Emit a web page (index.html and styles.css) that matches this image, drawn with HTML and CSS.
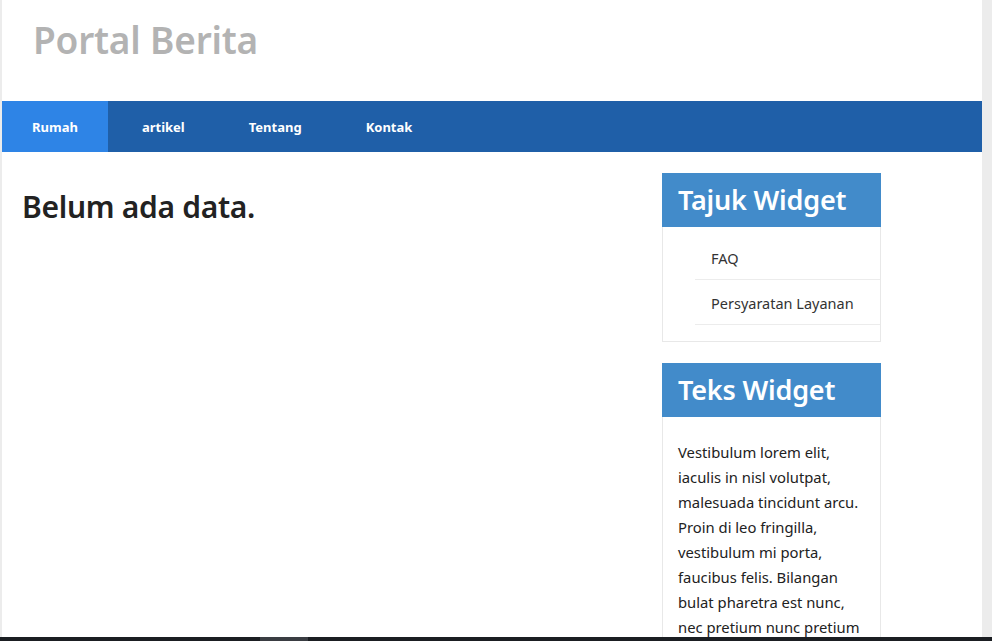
FILE: index.html
```html
<!DOCTYPE html>
<html lang="id">
<head>
<meta charset="utf-8">
<title>Portal Berita</title>
<link rel="stylesheet" href="styles.css">
</head>
<body>
<div class="page">
  <header class="site-header">
    <h1 class="site-title">Portal Berita</h1>
  </header>
  <nav class="main-nav">
    <a class="nav-item active" href="#">Rumah</a>
    <a class="nav-item" href="#">artikel</a>
    <a class="nav-item" href="#">Tentang</a>
    <a class="nav-item" href="#">Kontak</a>
  </nav>
  <div class="content">
    <main class="main">
      <h2 class="empty">Belum ada data.</h2>
    </main>
    <aside class="sidebar">
      <section class="widget">
        <h3 class="widget-title">Tajuk Widget</h3>
        <ul class="widget-list">
          <li><a href="#">FAQ</a></li>
          <li><a href="#">Persyaratan Layanan</a></li>
        </ul>
      </section>
      <section class="widget">
        <h3 class="widget-title">Teks Widget</h3>
        <div class="widget-text">
          <p>Vestibulum lorem elit, iaculis in nisl volutpat, malesuada tincidunt arcu. Proin di leo fringilla, vestibulum mi porta, faucibus felis. Bilangan bulat pharetra est nunc, nec pretium nunc pretium ac.</p>
        </div>
      </section>
    </aside>
  </div>
</div>
<div class="bottom-bar"><span class="bottom-thumb"></span></div>
</body>
</html>
```
FILE: styles.css
```css
* { box-sizing: border-box; }
html, body { margin: 0; padding: 0; }
body {
  background: #ececec;
  font-family: "Noto Sans", "Open Sans", sans-serif;
  color: #222;
  overflow: hidden;
  height: 641px;
}
.page {
  margin: 0 10px 0 2px;
  background: #fff;
  min-height: 641px;
}
.site-header {
  height: 101px;
  padding: 17px 31px 0;
}
.site-title {
  margin: 0;
  font-size: 37px;
  font-weight: 600;
  color: #b3b3b3;
  letter-spacing: -0.2px;
  line-height: 46px;
}
.main-nav {
  display: flex;
  gap: 4px;
  height: 51px;
  background: #1f5fa8;
}
.nav-item {
  display: flex;
  align-items: center;
  padding: 0 30px;
  color: #fff;
  font-size: 13px;
  font-weight: 700;
  text-decoration: none;
}
.nav-item.active { background: #2e84e6; }
.content {
  display: flex;
  padding: 21px 0 0 20px;
}
.main { flex: 1; }
.empty {
  margin: 14px 0 0;
  font-size: 30px;
  font-weight: 600;
  color: #222;
  letter-spacing: -0.3px;
  line-height: 40px;
}
.sidebar {
  width: 219px;
  margin-right: 101px;
  display: flex;
  flex-direction: column;
  gap: 21px;
}
.widget {
  border: 1px solid #e8e8e8;
  border-top: 0;
}
.widget-title {
  margin: 0 -1px;
  background: #428bca;
  color: #fff;
  font-size: 27px;
  font-weight: 600;
  letter-spacing: -0.2px;
  height: 54px;
  line-height: 54px;
  padding: 0 16px;
}
.widget-list {
  list-style: none;
  margin: 8px 0 16px;
  padding: 0 0 0 32px;
}
.widget-list li {
  border-bottom: 1px solid #ececec;
  height: 45px;
  padding: 2px 16px 0;
  display: flex;
  align-items: center;
}
.widget-list a {
  color: #333;
  text-decoration: none;
  font-size: 14.5px;
}
.widget-text { padding: 23px 15px 15px; }
.widget-text p {
  margin: 0;
  font-size: 14.8px;
  line-height: 25px;
  color: #222;
}
.bottom-bar {
  position: fixed;
  left: 0;
  right: 0;
  bottom: 0;
  height: 4px;
  background: #1b1e22;
}
.bottom-thumb {
  position: absolute;
  left: 260px;
  width: 48px;
  top: 0;
  bottom: 0;
  background: #3a3d42;
}
```
